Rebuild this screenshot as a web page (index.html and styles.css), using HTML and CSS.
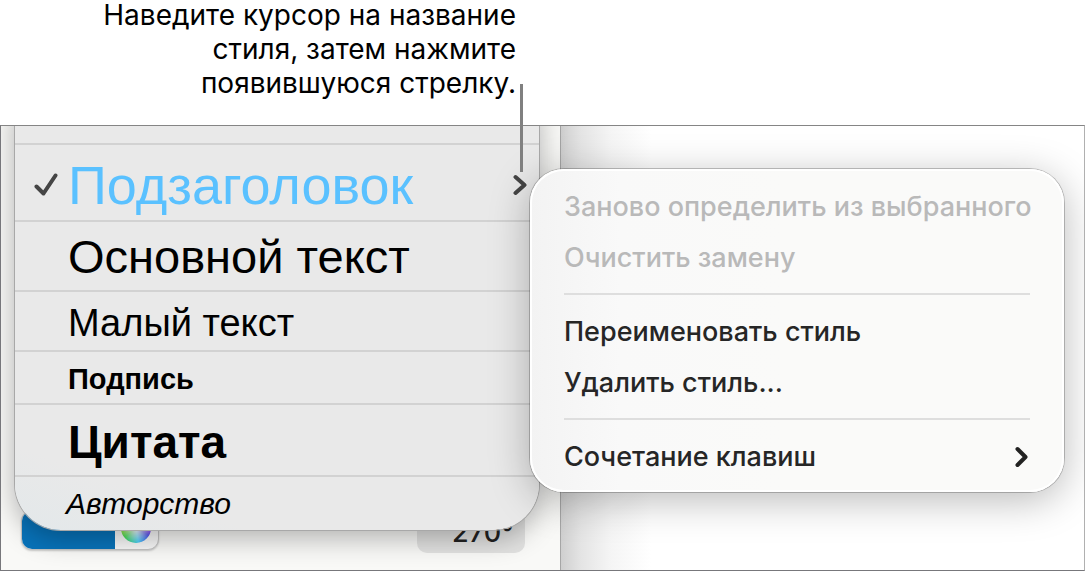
FILE: index.html
```html
<!DOCTYPE html>
<html lang="ru">
<head>
<meta charset="utf-8">
<title>Стили абзаца</title>
<link rel="stylesheet" href="styles.css">
</head>
<body>
<figure class="figure">
  <figcaption class="caption">Наведите курсор на название<br>стиля, затем нажмите<br>появившуюся стрелку.</figcaption>
  <div class="window">
    <aside class="sidebar">
      <div class="controls">
        <div class="color-control">
          <button class="swatch" type="button" aria-label="Цвет"></button>
          <button class="wheel-button" type="button" aria-label="Палитра"><span class="wheel"></span></button>
        </div>
        <button class="angle" type="button">270°</button>
      </div>
    </aside>
    <main class="canvas"></main>

    <ul class="styles">
      <li class="style-row style-row-first"></li>
      <li class="style-row row-heading">
        <svg class="check" viewBox="0 0 24 24" aria-hidden="true"><path d="M2.500 13.500 L9.500 20.500 L21.500 2.500"/></svg>
        <button class="style-name" type="button">Подзаголовок</button>
        <button class="arrow" type="button" aria-label="Параметры стиля"><svg class="chevron" viewBox="0 0 14 22" aria-hidden="true"><path d="M2.500 3 L11.500 11 L2.500 19"/></svg></button>
      </li>
      <li class="style-row row-body"><button class="style-name" type="button">Основной текст</button></li>
      <li class="style-row row-small"><button class="style-name" type="button">Малый текст</button></li>
      <li class="style-row row-label"><button class="style-name" type="button">Подпись</button></li>
      <li class="style-row row-quote"><button class="style-name" type="button">Цитата</button></li>
      <li class="style-row row-author"><button class="style-name" type="button">Авторство</button></li>
    </ul>

    <div class="menu">
      <button class="menu-item" type="button" disabled>Заново определить из выбранного</button>
      <button class="menu-item" type="button" disabled>Очистить замену</button>
      <hr class="separator">
      <button class="menu-item" type="button">Переименовать стиль</button>
      <button class="menu-item" type="button">Удалить стиль...</button>
      <hr class="separator">
      <button class="menu-item" type="button">Сочетание клавиш<svg class="chevron chevron-bold" viewBox="0 0 14 22" aria-hidden="true"><path d="M2.500 3 L10.500 11 L2.500 19"/></svg></button>
    </div>
  </div>
  <div class="callout-line"></div>
</figure>
</body>
</html>
```

FILE: styles.css
```css
* {
  box-sizing: border-box;
}

body {
  margin: 0;
  background: #fff;
  font-family: Inter, "Liberation Sans", sans-serif;
}

button {
  margin: 0;
  padding: 0;
  border: 0;
  background: none;
  color: inherit;
  font: inherit;
  text-align: left;
}

.figure {
  position: relative;
  display: flex;
  flex-direction: column;
  min-height: 100vh;
  margin: 0;
  padding-bottom: 1px;
}

.caption {
  width: 516px;
  height: 127px;
  margin-top: -2px;
  font-size: 28px;
  line-height: 34px;
  text-align: right;
  color: #000;
}

.window {
  position: relative;
  display: flex;
  flex: 1;
  min-height: 446px;
  overflow: hidden;
  border: 1px solid #77777b;
  border-top-color: #858585;
  border-right-color: #b0b0b0;
}

.sidebar {
  display: flex;
  flex-direction: column;
  justify-content: flex-end;
  width: 560px;
  padding: 0 35px 17px 20px;
  border-right: 1px solid #a6a6a6;
  background: #f9f9f7;
}

.controls {
  display: flex;
  justify-content: space-between;
  align-items: flex-end;
}

.color-control {
  display: flex;
  width: 138px;
  height: 40px;
  margin-bottom: 3px;
  overflow: hidden;
  border: 1px solid #c4c4c4;
  border-radius: 11px;
  background: #f9f9f9;
  box-shadow: 0 1px 2px rgba(0, 0, 0, 0.2);
}

.swatch {
  width: 93px;
  background: #0873ba;
}

.wheel-button {
  display: flex;
  flex: 1;
  justify-content: center;
  align-items: flex-end;
  padding-right: 2px;
  padding-bottom: 6px;
}

.wheel {
  width: 30px;
  height: 30px;
  border-radius: 50%;
  background:
    radial-gradient(circle, #fff 5%, rgba(255, 255, 255, 0) 75%),
    conic-gradient(#f44, #f4f 70deg, #44e 120deg, #3cf 170deg, #3d4 230deg, #fe3 300deg, #f44);
}

.angle {
  width: 108px;
  height: 44px;
  padding-left: 35px;
  border-radius: 10px;
  background: #e2e2e1;
  color: #222;
  font-size: 27px;
  font-weight: 500;
  line-height: 48px;
}

.canvas {
  flex: 1;
  background: linear-gradient(90deg, #cfcfcf 0, #e4e4e4 20px, #f5f5f5 50px, #fff 90px);
}

.styles {
  position: absolute;
  top: -24px;
  left: 14px;
  width: 524px;
  margin: 0;
  padding: 0;
  overflow: hidden;
  list-style: none;
  border-radius: 0 0 46px 46px;
  background: linear-gradient(20deg, #e3e8ea 0, #e9e9e9 80px);
  box-shadow: 0 0 0 1px #a8a8a8, 0 8px 28px rgba(0, 0, 0, 0.3);
  color: #000;
  font-family: "Liberation Sans", sans-serif;
}

.style-row {
  display: flex;
  align-items: center;
  padding: 4px 12px 0 53px;
  border-bottom: 2px solid #d2d2d2;
}

.style-row-first {
  height: 43px;
}

.row-heading {
  height: 77px;
  padding-left: 19px;
  color: #5ac1ff;
  font-size: 54px;
  line-height: 60px;
}

.row-body {
  height: 70px;
  padding-top: 0;
  font-size: 47px;
}

.row-small {
  height: 60px;
  font-size: 38px;
}

.row-label {
  height: 53px;
  font-size: 29px;
  font-weight: 700;
}

.row-quote {
  height: 72px;
  font-size: 46px;
  font-weight: 700;
}

.row-author {
  height: 53px;
  padding-top: 0;
  padding-left: 51px;
  border-bottom: 0;
  font-size: 30px;
  font-style: italic;
}

.style-name {
  flex: 1;
  white-space: nowrap;
}

.check {
  width: 24px;
  height: 24px;
  margin-right: 10px;
  fill: none;
  stroke: #454545;
  stroke-width: 4;
  stroke-linecap: round;
  stroke-linejoin: round;
}

.arrow {
  display: flex;
}

.chevron {
  width: 14px;
  height: 22px;
  fill: none;
  stroke: #454545;
  stroke-width: 4;
  stroke-linecap: round;
  stroke-linejoin: round;
}

.chevron-bold {
  margin-right: 1px;
  stroke: #222;
}

.menu {
  position: absolute;
  top: 43px;
  left: 529px;
  width: 534px;
  padding: 12px 34px 10px;
  border-radius: 34px;
  background: linear-gradient(90deg, #f3f3f3 0, #f9f9f9 90px, #fafaf9 250px);
  box-shadow: inset 0 0 0 2px #fff, 0 0 0 1px rgba(0, 0, 0, 0.22), 0 8px 40px rgba(0, 0, 0, 0.28);
  color: #262626;
  font-size: 27px;
  font-weight: 500;
}

.menu-item {
  display: flex;
  justify-content: space-between;
  align-items: center;
  width: 100%;
  height: 51px;
  white-space: nowrap;
}

.menu-item:disabled {
  color: #b9b9b9;
}

.separator {
  height: 2px;
  margin: 10px 0 11px;
  border: 0;
  background: #dedede;
}

.callout-line {
  position: absolute;
  top: 84px;
  left: 520px;
  width: 3px;
  height: 88px;
  background: #808080;
}
```
